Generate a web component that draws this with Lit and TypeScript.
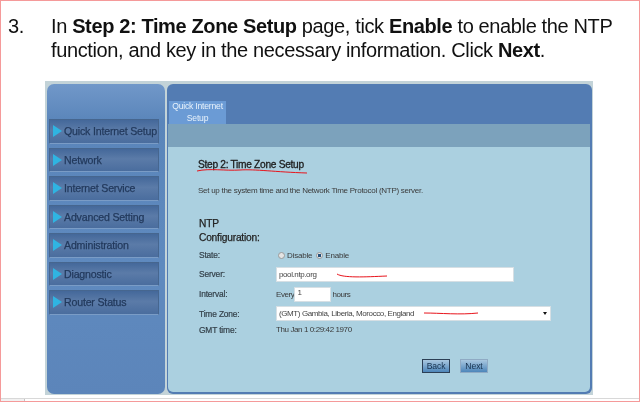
import { LitElement, html, css, svg } from "lit";
import { customElement } from "lit/decorators.js";

const NAV = ["Quick Internet Setup", "Network", "Internet Service", "Advanced Setting", "Administration", "Diagnostic", "Router Status"];

@customElement("app-root")
export class AppRoot extends LitElement {
  static styles = css`
    :host {
      display: flex;
      flex-direction: column;
      box-sizing: border-box;
      width: 640px;
      height: 402px;
      border: 1px solid #f59a9a;
      background: #fff;
      font-family: "Liberation Sans", Arial, sans-serif;
      position: relative;
      overflow: hidden;
    }
    .step {
      display: flex;
      padding: 13px 20px 0 7px;
      color: #111;
      font-size: 20px;
      letter-spacing: -0.37px;
      line-height: 24px;
      height: 80px;
      box-sizing: border-box;
      filter: blur(0.3px);
    }
    .num { width: 43px; flex: none; }
    .step p { margin: 0; white-space: nowrap; }
    .shot {
      position: relative;
      margin-left: 44px;
      width: 548px;
      height: 314px;
      flex: none;
      box-sizing: border-box;
      padding: 3px 1px 1px 2px;
      background: #c3d3d8;
      display: flex;
      gap: 2px;
      filter: blur(0.4px);
    }
    .side {
      width: 118px;
      flex: none;
      box-sizing: border-box;
      padding: 35px 2px 0 2px;
      border-radius: 7px;
      background: linear-gradient(#7198c9 0, #5a85ba 12%, #5f8abf 60%, #5c85ba 100%);
      display: flex;
      flex-direction: column;
    }
    .item {
      height: 24.5px;
      margin-bottom: 4px;
      width: 110px;
      box-sizing: border-box;
      display: flex;
      align-items: center;
      gap: 2px;
      padding-left: 3px;
      border: 1px solid #46668f;
      border-bottom-color: #7a9cc6;
      background: linear-gradient(#44689a, #5b7ba8 45%, #4a6d9e);
      color: #22395c;
      font-size: 10.6px;
      letter-spacing: -0.18px;
      -webkit-text-stroke: 0.25px #22395c;
      white-space: nowrap;
    }
    .tri {
      width: 0; height: 0; flex: none;
      border-left: 9px solid #2fb4e2;
      border-top: 6px solid transparent;
      border-bottom: 6px solid transparent;
    }
    .main {
      flex: 1;
      border-radius: 6px;
      background: #537cb3;
      display: flex;
      flex-direction: column;
      padding: 0 2px 2px 1px;
      overflow: hidden;
    }
    .tabs { height: 40px; display: flex; align-items: flex-end; }
    .tab {
      width: 57px;
      height: 23px;
      margin-left: 1px;
      background: #6b9bd5;
      color: #e8f2fb;
      font-size: 8.6px;
      letter-spacing: -0.2px;
      line-height: 11.5px;
      text-align: center;
    }
    .band { height: 23px; background: #7ca2bc; flex: none; }
    .content {
      flex: 1;
      background: #abd0e0;
      padding: 11px 0 0 30px;
      color: #333;
      border-radius: 0 0 5px 5px;
    }
    h2 {
      margin: 0;
      font-size: 10.2px;
      letter-spacing: -0.3px;
      line-height: 13px;
      font-weight: 400;
      -webkit-text-stroke: 0.3px #1c1c1c;
      color: #1c1c1c;
    }
    .desc {
      margin: 15px 0 0;
      font-size: 8px;
      letter-spacing: -0.27px;
      line-height: 10px;
      color: #3a3a3a;
    }
    .cfg {
      margin: 21px 0 0 1px;
      font-size: 10.2px;
      letter-spacing: -0.2px;
      line-height: 13.7px;
      font-weight: 400;
      -webkit-text-stroke: 0.25px #222;
      color: #222;
    }
    .form {
      display: grid;
      grid-template-columns: 77px 1fr;
      margin-left: 1px;
      font-size: 8px;
      letter-spacing: -0.4px;
      color: #3a3a3a;
      align-items: center;
    }
    .lbl {
      display: flex;
      align-items: center;
      color: #34414a;
      font-size: 8.4px;
      letter-spacing: -0.15px;
      -webkit-text-stroke: 0.2px #34414a;
    }
    .val { display: flex; align-items: center; white-space: nowrap; }
    .state { padding-left: 2px; letter-spacing: -0.2px; }
    .radio {
      width: 7px; height: 7px; border-radius: 50%; flex: none;
      background: #e4e4e4; border: 1px solid #9a9a9a; box-sizing: border-box;
      margin-right: 2px;
    }
    .radio.on { background: radial-gradient(circle, #24507a 0 1.6px, #e8e8e8 2px); margin-left: 4px; }
    .r1 { height: 18px; margin-top: 2px; }
    .r2 { height: 20px; }
    .r3 { height: 20px; }
    .r4 { height: 19px; }
    .r5 { height: 13px; }
    .box {
      background: #fff;
      height: 15px;
      box-sizing: border-box;
      display: flex;
      align-items: center;
      padding-left: 2px;
      border: 1px solid #d6dfe4;
      color: #444;
    }
    .server { width: 238px; }
    .interval { width: 37px; margin: 0 1px 0 0; align-items: flex-start; }
    .tz { width: 275px; justify-content: space-between; padding-right: 3px; }
    .arrow { width: 0; height: 0; border-left: 2px solid transparent; border-right: 2px solid transparent; border-top: 3px solid #111; }
    .btns {
      display: flex;
      gap: 10px;
      margin: 23px 0 0 224px;
    }
    .btn {
      width: 28px; height: 14px;
      box-sizing: border-box;
      display: flex; align-items: center; justify-content: center;
      border: 1px solid #8faac4;
      background: linear-gradient(#a9c8e0, #4d86ba);
      color: #17324f;
      font-size: 8.6px;
      letter-spacing: -0.1px;
    }
    .btn.focus { border-color: #2c3f55; }
    .marks { position: absolute; left: 0; top: 0; width: 548px; height: 314px; pointer-events: none; }
    .foot {
      flex: 1;
      margin-top: 3px;
      border-top: 1px solid #d8d8d8;
      display: flex;
    }
    .foot-cell { width: 23px; background: #f1f1f1; border-right: 1px solid #c4c4c4; }
  `;

  render() {
    return html`
      <div class="step">
        <div class="num">3.</div>
        <p>In <b>Step 2: Time Zone Setup</b> page, tick <b>Enable</b> to enable the NTP<br>function, and key in the necessary information. Click <b>Next</b>.</p>
      </div>
      <div class="shot">
        <div class="side">
          ${NAV.map((n) => html`<div class="item"><span class="tri"></span>${n}</div>`)}
        </div>
        <div class="main">
          <div class="tabs"><div class="tab">Quick Internet<br>Setup</div></div>
          <div class="band"></div>
          <div class="content">
            <h2>Step 2: Time Zone Setup</h2>
            <p class="desc">Set up the system time and the Network Time Protocol (NTP) server.</p>
            <div class="cfg">NTP<br>Configuration:</div>
            <div class="form">
              <div class="lbl r1">State:</div>
              <div class="val r1 state"><span class="radio"></span>Disable<span class="radio on"></span>Enable</div>
              <div class="lbl r2">Server:</div>
              <div class="val r2"><div class="box server">pool.ntp.org</div></div>
              <div class="lbl r3">Interval:</div>
              <div class="val r3">Every<div class="box interval">1</div>hours</div>
              <div class="lbl r4">Time Zone:</div>
              <div class="val r4"><div class="box tz">(GMT) Gambia, Liberia, Morocco, England<span class="arrow"></span></div></div>
              <div class="lbl r5">GMT time:</div>
              <div class="val r5">Thu Jan 1 0:29:42 1970</div>
            </div>
            <div class="btns">
              <div class="btn focus">Back</div>
              <div class="btn">Next</div>
            </div>
          </div>
        </div>
        <svg class="marks" viewBox="0 0 548 314" fill="none" stroke="#e8141c" stroke-width="1">
          ${svg`
            <path d="M152 90 C165 87 180 90 195 89 C210 88 230 91 262 92"/>
            <path d="M292 193 C298 197 320 196 342 195"/>
            <path d="M379 232 C395 232 415 234 433 232"/>
          `}
        </svg>
      </div>
      <div class="foot"><div class="foot-cell"></div></div>
    `;
  }
}
